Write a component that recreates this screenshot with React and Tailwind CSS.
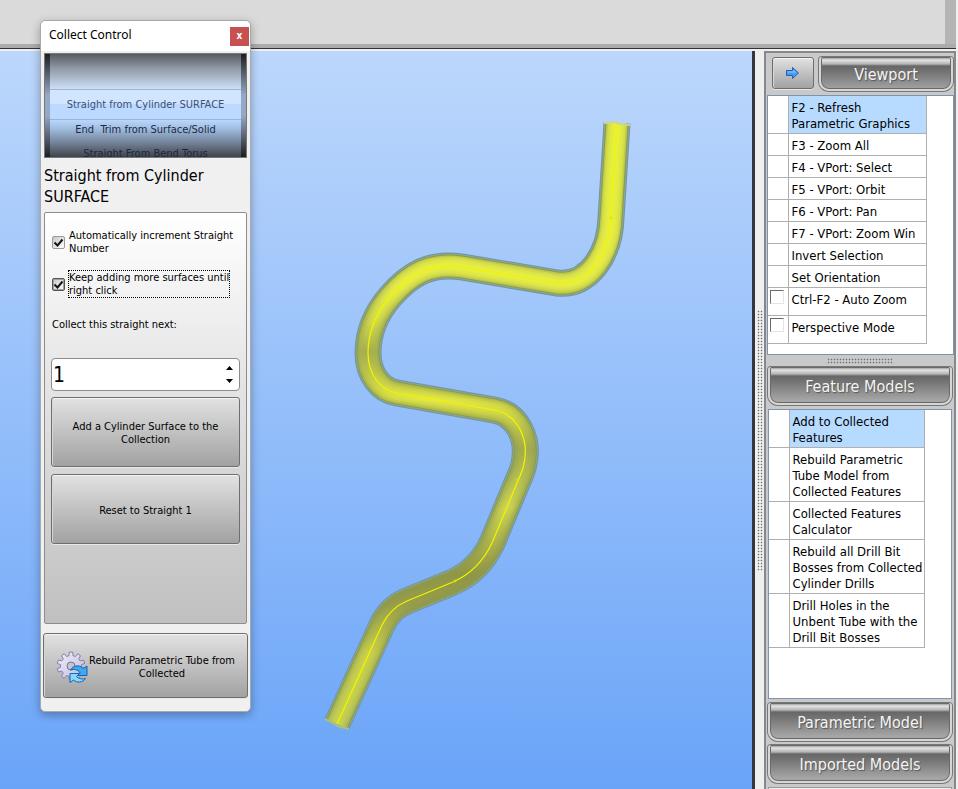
import React from "react";

const TUBE =
  "M617 123 L611 218 C610 252 590 287 557 283 L462 267 C430 262 410 274 390 297 C378 311 368 330 368 353 C368 374 380 390 397 393 L494 410 C517 414 531 439 523 468 C521 474 519 479 517 483 L492 543 C484 560 471 574 453 582 L407 601 C395 606 388 613 382 625 L337 724";

const VIEWPORT_ITEMS = [
  { label: "F2 - Refresh Parametric Graphics", active: true },
  { label: "F3 - Zoom All" },
  { label: "F4 - VPort: Select" },
  { label: "F5 - VPort: Orbit" },
  { label: "F6 - VPort: Pan" },
  { label: "F7 - VPort: Zoom Win" },
  { label: "Invert Selection" },
  { label: "Set Orientation" },
  { label: "Ctrl-F2 - Auto Zoom", check: "auto-zoom" },
  { label: "Perspective Mode", check: "perspective" },
];

const FEATURE_ITEMS = [
  { label: "Add to Collected Features", active: true },
  { label: "Rebuild Parametric Tube Model from Collected Features" },
  { label: "Collected Features Calculator" },
  { label: "Rebuild all Drill Bit Bosses from Collected Cylinder Drills" },
  { label: "Drill Holes in the Unbent Tube with the Drill Bit Bosses" },
];

const BUTTON =
  "rounded-[3px] border border-[#6e6e6e] bg-linear-to-b from-[#e2e2e2] to-[#a2a2a2] shadow-[inset_0_1px_0_#f4f4f4,inset_1px_0_0_#d6d6d6,0_1px_0_#e8e8e8]";

const TEETH = 10;
const GEAR = Array.from({ length: TEETH }, (_, i) => {
  const step = (Math.PI * 2) / TEETH;
  return [
    [-0.3, 10.5],
    [-0.2, 14],
    [0.2, 14],
    [0.3, 10.5],
  ]
    .map(([offset, r]) => {
      const a = (i + offset) * step;
      return `${(r * Math.sin(a)).toFixed(2)},${(-r * Math.cos(a)).toFixed(2)}`;
    })
    .join(" ");
}).join(" ");

function Tube() {
  return (
    <svg viewBox="0 51 752 738" className="h-full w-full" aria-label="Tube model">
      <defs>
        <linearGradient id="body" gradientUnits="userSpaceOnUse" x1="0" y1="123" x2="0" y2="725">
          <stop offset="0" stopColor="#d3dd43" />
          <stop offset="0.2" stopColor="#d6de48" />
          <stop offset="0.27" stopColor="#cdd64e" />
          <stop offset="0.38" stopColor="#a5b04f" />
          <stop offset="0.46" stopColor="#c4cd48" />
          <stop offset="0.54" stopColor="#9ba652" />
          <stop offset="0.64" stopColor="#b3bd50" />
          <stop offset="0.75" stopColor="#8f9648" />
          <stop offset="0.8" stopColor="#92994c" />
          <stop offset="0.88" stopColor="#b5be4c" />
          <stop offset="1" stopColor="#b3c05a" />
        </linearGradient>
        <linearGradient id="glow" gradientUnits="userSpaceOnUse" x1="0" y1="123" x2="0" y2="725">
          <stop offset="0" stopColor="#e6f03c" />
          <stop offset="0.27" stopColor="#e6ee44" />
          <stop offset="0.33" stopColor="#d2db48" />
          <stop offset="0.38" stopColor="#a6ae4e" />
          <stop offset="0.46" stopColor="#e2e842" />
          <stop offset="0.54" stopColor="#a2ab4e" />
          <stop offset="0.64" stopColor="#ccd450" />
          <stop offset="0.75" stopColor="#8f9646" />
          <stop offset="0.8" stopColor="#989f48" />
          <stop offset="0.88" stopColor="#c8d04a" />
          <stop offset="1" stopColor="#c5d24c" />
        </linearGradient>
      </defs>
      <g fill="none" strokeLinejoin="round">
        <path d={TUBE} stroke="#7494a0" strokeWidth="27" />
        <path d={TUBE} stroke="#8ba988" strokeWidth="25" />
        <path d={TUBE} stroke="#8b9b50" strokeWidth="23" />
        <path d={TUBE} stroke="url(#body)" strokeWidth="21" strokeOpacity="0.7" />
        <path d={TUBE} stroke="url(#body)" strokeWidth="18" />
        <path d={TUBE} stroke="url(#glow)" strokeWidth="14" strokeOpacity="0.5" />
        <path d={TUBE} stroke="url(#glow)" strokeWidth="10" strokeOpacity="0.6" />
        <path d={TUBE} stroke="url(#glow)" strokeWidth="6" />
        <path d={TUBE} stroke="#f2f400" strokeWidth="1.2" />
      </g>
      <path d="M604 123 L616 122 L619 124 L630 125" fill="none" stroke="#c7d79a" strokeWidth="2" />
      <path d="M325 719 L331 722 L337 726 L349 729" fill="none" stroke="#a9bd84" strokeWidth="2" />
      <g fill="none" stroke="#dce400" strokeWidth="1">
        <circle cx="611" cy="218" r="1" />
        <circle cx="376" cy="322" r="1" />
        <circle cx="517" cy="480" r="1" />
        <circle cx="455" cy="581" r="1" />
      </g>
    </svg>
  );
}

function GearIcon() {
  return (
    <svg viewBox="0 0 32 32" className="h-8 w-8 shrink-0" aria-hidden="true">
      <defs>
        <linearGradient id="gear" x1="0" y1="0" x2="1" y2="1">
          <stop offset="0" stopColor="#f2f0fc" />
          <stop offset="1" stopColor="#bdb8dc" />
        </linearGradient>
      </defs>
      <g transform="translate(15 15)">
        <polygon points={GEAR} fill="url(#gear)" stroke="#8580ad" strokeWidth="1" strokeLinejoin="round" />
        <circle r="4" fill="#c6c6c6" stroke="#77739c" />
      </g>
      <path
        d="M14.500 19c3-5 9-5.500 12.500-1.500L31 15v9.500h-10l3-3c-2.500-3-6-3.500-9.500-2.500z"
        fill="#3fa6ef"
        stroke="#1763b5"
        strokeWidth="1"
        strokeLinejoin="round"
      />
      <path
        d="M29.500 27.500c-3 4.500-8.500 4.500-12 1.500L14 31.500v-9h9.500l-3 3c2.500 2.500 6 3 9 2z"
        fill="#8ad8fc"
        stroke="#1763b5"
        strokeWidth="1"
        strokeLinejoin="round"
      />
    </svg>
  );
}

function ArrowIcon() {
  return (
    <svg viewBox="0 0 16 14" className="h-[14px] w-4" aria-hidden="true">
      <path
        d="M1.500 4.500h6V1.500L13.500 7 7.500 12.500v-3h-6z"
        fill="#4a9cf0"
        stroke="#1d5fb4"
        strokeLinejoin="round"
      />
      <path d="M2.500 5.500h6V4L11 6.500h-8.500z" fill="#8cc6fb" />
    </svg>
  );
}

function Check({ id, children, focused }) {
  return (
    <div className="flex items-center gap-[3px]">
      <input id={id} type="checkbox" defaultChecked className="peer sr-only" />
      <label
        htmlFor={id}
        className={
          "flex h-[13px] w-[13px] shrink-0 items-center justify-center rounded-[2px] border bg-linear-to-br from-[#c8c8c8] to-white " +
          (focused ? "border-[#555555] shadow-[inset_0_0_0_1px_#a0a0a0]" : "border-[#9a9a9a]")
        }
      >
        <svg viewBox="0 0 11 11" className="h-[11px] w-[11px]" aria-hidden="true">
          <path d="M1.500 5.500 L4.500 8.500 L9.500 2.500" fill="none" stroke="#151515" strokeWidth="2" />
        </svg>
      </label>
      <label
        htmlFor={id}
        className={
          "min-w-[161px] border border-dotted leading-[13px] whitespace-nowrap " +
          (focused ? "border-black" : "border-transparent")
        }
      >
        {children}
      </label>
    </div>
  );
}

function SectionButton({ children, className = "" }) {
  return (
    <button
      type="button"
      className={
        "rounded-t-[3px] rounded-b-[10px] border-2 border-t-0 border-[#d6d6d6] bg-[linear-gradient(#808080_0px,#e4e4e4_3px,#b4b4b4_7px,#666666_9px,#777777_16px,#a8a8a8_34px,#8a8a8a_38px)] pt-1 text-[16px] leading-5 text-[#f4f4f4] shadow-[inset_0_0_0_1px_#6a6a6a,0_0_0_1px_#777777] [text-shadow:1px_1px_1px_#555555] " +
        className
      }
    >
      {children}
    </button>
  );
}

function CommandTable({ items, label, width }) {
  return (
    <table aria-label={label} className={"table-fixed border-collapse text-[13px] leading-4 text-black " + width}>
      <colgroup>
        <col className="w-5" />
        <col />
      </colgroup>
      <tbody>
        {items.map((item) => (
          <tr key={item.label} className={item.check ? "h-7" : "h-[22px]"}>
            <td className="border-r border-b border-[#b0b0b0] p-0 align-top">
              {item.check && (
                <input
                  id={item.check}
                  type="checkbox"
                  className="mt-[2px] ml-[2px] block h-[14px] w-[14px] appearance-none border border-r-[#e4e4e4] border-b-[#e4e4e4] border-t-[#696969] border-l-[#696969] bg-white"
                />
              )}
            </td>
            <td
              className={
                "border-b border-[#b0b0b0] border-r pt-1 pr-0 pb-px pl-[3px] " +
                (item.check ? "align-top " : "align-middle ") +
                (item.active ? "bg-[#b7dbff]" : "bg-white")
              }
            >
              {item.check ? <label htmlFor={item.check}>{item.label}</label> : item.label}
            </td>
          </tr>
        ))}
      </tbody>
    </table>
  );
}

function CollectDialog() {
  return (
    <section
      aria-label="Collect Control"
      className="absolute top-5 left-10 flex w-[211px] flex-col rounded-[5px] border border-[#a5a9b0] bg-[#f0f0f0] pb-[13px] text-[11px] leading-[13px] text-black shadow-[0_3px_10px_rgba(0,0,0,0.3)]"
    >
      <header className="flex h-[30px] items-center justify-between rounded-t-[5px] bg-white pr-px pl-2">
        <h1 className="pb-1 font-['Noto_Sans',sans-serif] text-[12px]">Collect Control</h1>
        <button
          type="button"
          aria-label="Close"
          className="flex h-[19px] w-[19px] items-center justify-center bg-[#c75050] pb-px text-[10px] font-bold text-white"
        >
          x
        </button>
      </header>

      <ul className="relative mx-[3px] mt-[2px] flex h-[105px] flex-col overflow-hidden border border-[#777777] bg-[linear-gradient(#585b61_0px,#8f98a5_14px,#d0e2fa_36px,#b9d7fd_66px,#a2bfe3_74px,#6f7d92_90px,#3c3f46_104px)] pt-[35px] text-center text-[#1c2942]">
        <li className="h-[31px] border-y border-[#9fb4d0] bg-linear-to-b from-[#d2e5ff] from-50% to-[#bcd9ff] to-50% leading-[29px] text-[#3c4f74]">
          Straight from Cylinder SURFACE
        </li>
        <li className="h-5 leading-5 whitespace-pre">End&nbsp; Trim from Surface/Solid</li>
        <li className="mt-[7px] leading-[13px]">Straight From Bend Torus</li>
        <li
          aria-hidden="true"
          className="pointer-events-none absolute inset-y-0 left-0 w-[5px] bg-[linear-gradient(#1c1d20,#95a8c6_40%,#95a8c6_60%,#1c1d20)]"
        />
        <li
          aria-hidden="true"
          className="pointer-events-none absolute inset-y-0 right-0 w-[5px] bg-[linear-gradient(#1c1d20,#95a8c6_40%,#95a8c6_60%,#1c1d20)]"
        />
      </ul>

      <h2 className="mx-[3px] mt-[7px] text-[16px] leading-[21px]">Straight from Cylinder SURFACE</h2>

      <div className="mx-[3px] mt-[5px] flex h-[412px] flex-col rounded-[2px] border border-[#8c8c8c] bg-linear-to-b from-white to-[#c0c0c0] px-[6px] pt-[15px]">
        <div className="flex flex-col gap-[14px] pl-px">
          <Check id="auto-increment">
            Automatically increment Straight
            <br />
            Number
          </Check>
          <Check id="keep-adding" focused>
            Keep adding more surfaces until
            <br />
            right click
          </Check>
        </div>
        <label htmlFor="straight" className="mt-5 ml-px">
          Collect this straight next:
        </label>
        <div className="mt-[27px] flex h-[33px] items-center rounded-[4px] border border-[#8c8c8c] bg-white pr-1">
          <input
            id="straight"
            defaultValue="1"
            inputMode="numeric"
            className="min-w-0 flex-1 bg-transparent pl-px text-[21px] outline-none"
          />
          <div className="flex flex-col gap-[3px]">
            <button type="button" aria-label="Increase" className="flex h-[10px] w-3 items-center justify-center">
              <svg viewBox="0 0 7 4" className="h-1 w-[7px]">
                <path d="M0 4L3.500 0 7 4z" />
              </svg>
            </button>
            <button type="button" aria-label="Decrease" className="flex h-[10px] w-3 items-center justify-center">
              <svg viewBox="0 0 7 4" className="h-1 w-[7px]">
                <path d="M0 0L3.500 4 7 0z" />
              </svg>
            </button>
          </div>
        </div>
        <button type="button" className={BUTTON + " mt-[6px] h-[70px] px-4 pt-[2px]"}>
          Add a Cylinder Surface to the Collection
        </button>
        <button type="button" className={BUTTON + " mt-[7px] h-[70px] px-4 pt-[2px]"}>
          Reset to Straight 1
        </button>
      </div>

      <button
        type="button"
        className={BUTTON + " mx-[2px] mt-[9px] flex h-[65px] items-center justify-center gap-px px-2 pt-[2px]"}
      >
        <GearIcon />
        <span className="w-[146px]">Rebuild Parametric Tube from Collected</span>
      </button>
    </section>
  );
}

export default function App() {
  return (
    <div className="relative flex h-screen flex-col overflow-hidden bg-[#efefef] font-['DejaVu_Sans_Condensed','DejaVu_Sans',sans-serif]">
      <header className="mr-[2px] flex h-[49px] shrink-0 border-b border-[#333333] bg-[#acacac] pb-1">
        <div className="flex-1 bg-[#dadada]" />
        <div className="w-[11px] bg-[#b4b4b4]" />
      </header>

      <div className="mt-[2px] flex min-h-0 flex-1">
        <main className="min-w-0 flex-1 border-r-[3px] border-[#34373d] bg-linear-to-b from-[#bcd7fb] to-[#6aa4f8]">
          <Tube />
        </main>

        <div className="flex w-[9px] shrink-0 items-center justify-center bg-[#f0eff0] pt-10">
          <div className="h-[261px] w-[6px] bg-[radial-gradient(circle,#6d6d6d_35%,transparent_50%)] bg-[length:3px_3px]" />
        </div>

        <aside className="mr-[2px] flex w-[192px] shrink-0 flex-col border-x-2 border-t-2 border-[#85888c] bg-[#c9c9c9]">
          <div className="flex h-[42px] shrink-0 items-start gap-[5px] pt-1 pl-[6px]">
            <button
              type="button"
              aria-label="Next"
              className={BUTTON + " flex h-8 w-[42px] items-center justify-center"}
            >
              <ArrowIcon />
            </button>
            <SectionButton className="mr-px h-[34px] flex-1">Viewport</SectionButton>
          </div>
          <div className="ml-px h-[260px] shrink-0 border border-[#7d93b0] bg-white">
            <CommandTable items={VIEWPORT_ITEMS} label="Viewport" width="w-[159px]" />
          </div>
          <div className="flex h-3 shrink-0 items-center justify-center">
            <div className="h-[6px] w-[66px] bg-[radial-gradient(circle,#6d6d6d_35%,transparent_50%)] bg-[length:3px_3px]" />
          </div>
          <SectionButton className="mx-[2px] h-[38px] shrink-0">Feature Models</SectionButton>
          <div className="mx-[2px] mt-1 h-[290px] shrink-0 border border-[#7d93b0] bg-white">
            <CommandTable items={FEATURE_ITEMS} label="Feature Models" width="w-[156px]" />
          </div>
          <SectionButton className="mx-[2px] mt-1 h-[38px] shrink-0">Parametric Model</SectionButton>
          <SectionButton className="mx-[2px] mt-1 h-[38px] shrink-0">Imported Models</SectionButton>
          <div className="mx-[2px] mt-1 h-2 shrink-0 border border-[#999999] bg-[#eeeeee]" />
        </aside>
      </div>

      <CollectDialog />
    </div>
  );
}
